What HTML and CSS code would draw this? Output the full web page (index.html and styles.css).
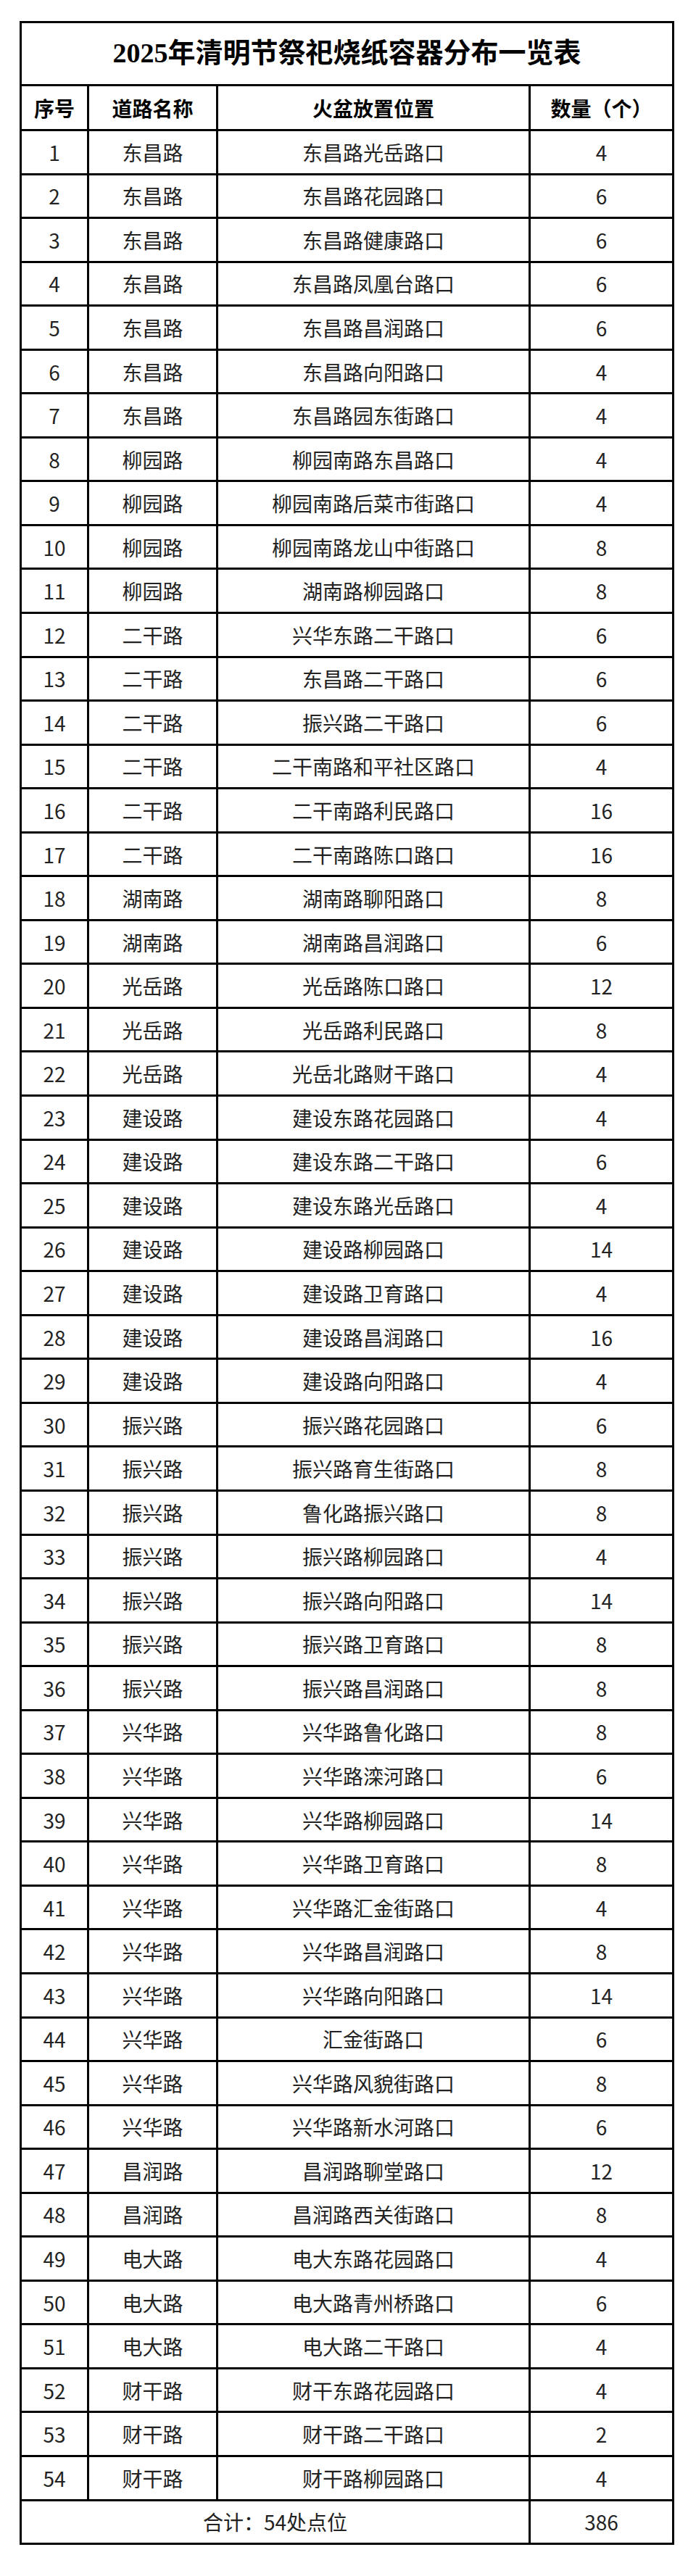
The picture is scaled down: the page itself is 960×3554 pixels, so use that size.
FILE: index.html
```html
<!DOCTYPE html>
<html lang="zh-CN">
<head>
<meta charset="utf-8">
<title>2025年清明节祭祀烧纸容器分布一览表</title>
<link rel="stylesheet" href="styles.css">
</head>
<body>
<div class="page">
<div class="sheet">
<div class="cell title">2025年清明节祭祀烧纸容器分布一览表</div>
<div class="cell head">序号</div><div class="cell head">道路名称</div><div class="cell head">火盆放置位置</div><div class="cell head">数量（个）</div>
<div class="cell">1</div><div class="cell">东昌路</div><div class="cell">东昌路光岳路口</div><div class="cell">4</div>
<div class="cell">2</div><div class="cell">东昌路</div><div class="cell">东昌路花园路口</div><div class="cell">6</div>
<div class="cell">3</div><div class="cell">东昌路</div><div class="cell">东昌路健康路口</div><div class="cell">6</div>
<div class="cell">4</div><div class="cell">东昌路</div><div class="cell">东昌路凤凰台路口</div><div class="cell">6</div>
<div class="cell">5</div><div class="cell">东昌路</div><div class="cell">东昌路昌润路口</div><div class="cell">6</div>
<div class="cell">6</div><div class="cell">东昌路</div><div class="cell">东昌路向阳路口</div><div class="cell">4</div>
<div class="cell">7</div><div class="cell">东昌路</div><div class="cell">东昌路园东街路口</div><div class="cell">4</div>
<div class="cell">8</div><div class="cell">柳园路</div><div class="cell">柳园南路东昌路口</div><div class="cell">4</div>
<div class="cell">9</div><div class="cell">柳园路</div><div class="cell">柳园南路后菜市街路口</div><div class="cell">4</div>
<div class="cell">10</div><div class="cell">柳园路</div><div class="cell">柳园南路龙山中街路口</div><div class="cell">8</div>
<div class="cell">11</div><div class="cell">柳园路</div><div class="cell">湖南路柳园路口</div><div class="cell">8</div>
<div class="cell">12</div><div class="cell">二干路</div><div class="cell">兴华东路二干路口</div><div class="cell">6</div>
<div class="cell">13</div><div class="cell">二干路</div><div class="cell">东昌路二干路口</div><div class="cell">6</div>
<div class="cell">14</div><div class="cell">二干路</div><div class="cell">振兴路二干路口</div><div class="cell">6</div>
<div class="cell">15</div><div class="cell">二干路</div><div class="cell">二干南路和平社区路口</div><div class="cell">4</div>
<div class="cell">16</div><div class="cell">二干路</div><div class="cell">二干南路利民路口</div><div class="cell">16</div>
<div class="cell">17</div><div class="cell">二干路</div><div class="cell">二干南路陈口路口</div><div class="cell">16</div>
<div class="cell">18</div><div class="cell">湖南路</div><div class="cell">湖南路聊阳路口</div><div class="cell">8</div>
<div class="cell">19</div><div class="cell">湖南路</div><div class="cell">湖南路昌润路口</div><div class="cell">6</div>
<div class="cell">20</div><div class="cell">光岳路</div><div class="cell">光岳路陈口路口</div><div class="cell">12</div>
<div class="cell">21</div><div class="cell">光岳路</div><div class="cell">光岳路利民路口</div><div class="cell">8</div>
<div class="cell">22</div><div class="cell">光岳路</div><div class="cell">光岳北路财干路口</div><div class="cell">4</div>
<div class="cell">23</div><div class="cell">建设路</div><div class="cell">建设东路花园路口</div><div class="cell">4</div>
<div class="cell">24</div><div class="cell">建设路</div><div class="cell">建设东路二干路口</div><div class="cell">6</div>
<div class="cell">25</div><div class="cell">建设路</div><div class="cell">建设东路光岳路口</div><div class="cell">4</div>
<div class="cell">26</div><div class="cell">建设路</div><div class="cell">建设路柳园路口</div><div class="cell">14</div>
<div class="cell">27</div><div class="cell">建设路</div><div class="cell">建设路卫育路口</div><div class="cell">4</div>
<div class="cell">28</div><div class="cell">建设路</div><div class="cell">建设路昌润路口</div><div class="cell">16</div>
<div class="cell">29</div><div class="cell">建设路</div><div class="cell">建设路向阳路口</div><div class="cell">4</div>
<div class="cell">30</div><div class="cell">振兴路</div><div class="cell">振兴路花园路口</div><div class="cell">6</div>
<div class="cell">31</div><div class="cell">振兴路</div><div class="cell">振兴路育生街路口</div><div class="cell">8</div>
<div class="cell">32</div><div class="cell">振兴路</div><div class="cell">鲁化路振兴路口</div><div class="cell">8</div>
<div class="cell">33</div><div class="cell">振兴路</div><div class="cell">振兴路柳园路口</div><div class="cell">4</div>
<div class="cell">34</div><div class="cell">振兴路</div><div class="cell">振兴路向阳路口</div><div class="cell">14</div>
<div class="cell">35</div><div class="cell">振兴路</div><div class="cell">振兴路卫育路口</div><div class="cell">8</div>
<div class="cell">36</div><div class="cell">振兴路</div><div class="cell">振兴路昌润路口</div><div class="cell">8</div>
<div class="cell">37</div><div class="cell">兴华路</div><div class="cell">兴华路鲁化路口</div><div class="cell">8</div>
<div class="cell">38</div><div class="cell">兴华路</div><div class="cell">兴华路滦河路口</div><div class="cell">6</div>
<div class="cell">39</div><div class="cell">兴华路</div><div class="cell">兴华路柳园路口</div><div class="cell">14</div>
<div class="cell">40</div><div class="cell">兴华路</div><div class="cell">兴华路卫育路口</div><div class="cell">8</div>
<div class="cell">41</div><div class="cell">兴华路</div><div class="cell">兴华路汇金街路口</div><div class="cell">4</div>
<div class="cell">42</div><div class="cell">兴华路</div><div class="cell">兴华路昌润路口</div><div class="cell">8</div>
<div class="cell">43</div><div class="cell">兴华路</div><div class="cell">兴华路向阳路口</div><div class="cell">14</div>
<div class="cell">44</div><div class="cell">兴华路</div><div class="cell">汇金街路口</div><div class="cell">6</div>
<div class="cell">45</div><div class="cell">兴华路</div><div class="cell">兴华路风貌街路口</div><div class="cell">8</div>
<div class="cell">46</div><div class="cell">兴华路</div><div class="cell">兴华路新水河路口</div><div class="cell">6</div>
<div class="cell">47</div><div class="cell">昌润路</div><div class="cell">昌润路聊堂路口</div><div class="cell">12</div>
<div class="cell">48</div><div class="cell">昌润路</div><div class="cell">昌润路西关街路口</div><div class="cell">8</div>
<div class="cell">49</div><div class="cell">电大路</div><div class="cell">电大东路花园路口</div><div class="cell">4</div>
<div class="cell">50</div><div class="cell">电大路</div><div class="cell">电大路青州桥路口</div><div class="cell">6</div>
<div class="cell">51</div><div class="cell">电大路</div><div class="cell">电大路二干路口</div><div class="cell">4</div>
<div class="cell">52</div><div class="cell">财干路</div><div class="cell">财干东路花园路口</div><div class="cell">4</div>
<div class="cell">53</div><div class="cell">财干路</div><div class="cell">财干路二干路口</div><div class="cell">2</div>
<div class="cell">54</div><div class="cell">财干路</div><div class="cell">财干路柳园路口</div><div class="cell">4</div>
<div class="cell total-label">合计：54处点位</div><div class="cell">386</div>
</div>
</div>
</body>
</html>
```

FILE: styles.css
```css
html, body {
  margin: 0;
  padding: 0;
  background: #ffffff;
}

.page {
  width: 960px;
  height: 3554px;
  padding: 29px 0 0 27px;
  box-sizing: border-box;
}

.sheet {
  display: grid;
  grid-template-columns: 93px 178px 431px 198px;
  grid-template-rows: 87px 62px;
  grid-auto-rows: 60.555px;
  width: 903px;
  box-sizing: border-box;
  border-top: 3px solid #000;
  border-left: 3px solid #000;
  font-family: "Noto Sans CJK SC", sans-serif;
  font-size: 28px;
  color: #222;
}

.cell {
  box-sizing: border-box;
  border-right: 3px solid #000;
  border-bottom: 3px solid #000;
  display: flex;
  align-items: center;
  justify-content: center;
  line-height: 1;
  white-space: nowrap;
}

.title {
  grid-column: 1 / 5;
  font-family: "Liberation Serif", "Noto Sans CJK SC", serif;
  font-size: 38px;
  font-weight: 700;
  color: #000;
  padding-bottom: 2px;
}

.head {
  font-weight: 700;
  color: #000;
}

.total-label {
  grid-column: 1 / 4;
}
```
